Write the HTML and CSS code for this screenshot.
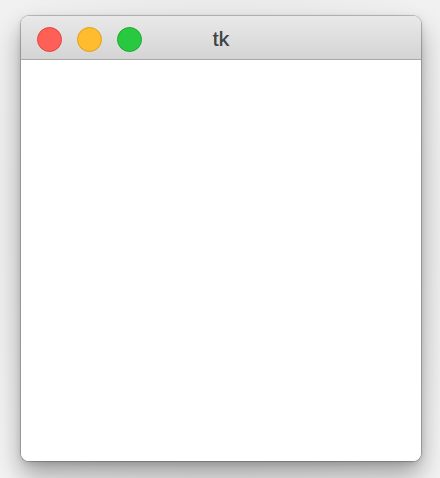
FILE: index.html
```html
<!DOCTYPE html>
<html>
<head>
<meta charset="utf-8">
<link rel="stylesheet" href="styles.css">
</head>
<body>
<div class="window">
  <div class="titlebar">
    <div class="lights">
      <span class="light red"></span>
      <span class="light yellow"></span>
      <span class="light green"></span>
    </div>
    <div class="title">tk</div>
  </div>
  <div class="content"></div>
</div>
</body>
</html>
```
FILE: styles.css
```css
html, body {
  margin: 0;
  padding: 0;
}
body {
  width: 440px;
  height: 478px;
  overflow: hidden;
  background: radial-gradient(ellipse at 50% 45%, #e2e2e2 0%, #ebebeb 60%, #f3f3f3 100%);
  padding: 16px 0 0 21px;
  box-sizing: border-box;
  font-family: "Liberation Sans", Arial, sans-serif;
}
.window {
  width: 400px;
  height: 445px;
  border-radius: 8px;
  background: #fff;
  box-shadow: 0 0 0 1px rgba(0,0,0,0.2), 0 14px 24px rgba(0,0,0,0.33), 0 2px 6px rgba(0,0,0,0.14);
  overflow: hidden;
  display: flex;
  flex-direction: column;
}
.titlebar {
  position: relative;
  height: 43px;
  flex: none;
  background: linear-gradient(#e9e9e9, #d4d4d4);
  border-bottom: 1px solid #a9a9a9;
  display: flex;
  align-items: center;
}
.lights {
  display: flex;
  gap: 15px;
  padding-left: 16px;
  padding-top: 3px;
}
.light {
  width: 25px;
  height: 25px;
  border-radius: 50%;
  box-sizing: border-box;
}
.red { background: #fe5f57; border: 1px solid #e2463f; }
.yellow { background: #febc2e; border: 1px solid #e1a116; }
.green { background: #28c840; border: 1px solid #1aab29; }
.title {
  position: absolute;
  left: 0;
  right: 0;
  top: 11px;
  text-align: center;
  font-size: 21px;
  color: #444;
  text-shadow: 0 0 0.6px #444;
}
.content {
  flex: 1;
  background: #fff;
}
```
